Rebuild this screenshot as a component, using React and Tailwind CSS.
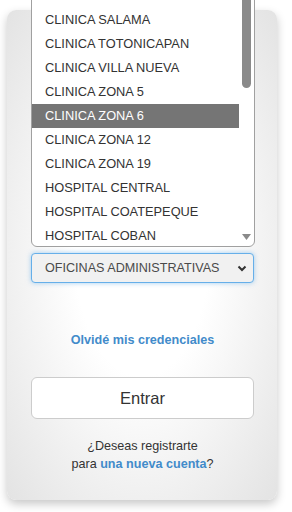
import React from "react";

const items = [
  "",
  "CLINICA SALAMA",
  "CLINICA TOTONICAPAN",
  "CLINICA VILLA NUEVA",
  "CLINICA ZONA 5",
  "CLINICA ZONA 6",
  "CLINICA ZONA 12",
  "CLINICA ZONA 19",
  "HOSPITAL CENTRAL",
  "HOSPITAL COATEPEQUE",
  "HOSPITAL COBAN",
];

export default function App() {
  return (
    <div
      className="relative w-[292px] h-[512px] overflow-hidden bg-white"
      style={{ fontFamily: '"Liberation Sans", Arial, sans-serif' }}
    >
      <div className="ml-[7px] mt-[10px] w-[270px] h-[490px] rounded-[9px] bg-[radial-gradient(ellipse_at_center,#ffffff_35%,#e3e3e3_100%)] shadow-[0_4px_10px_rgba(0,0,0,0.22)] pl-[24px] pr-[23px] flex flex-col">
        <div className="h-[243px] shrink-0" />
        <div className="h-[30px] rounded-[4px] border border-[#66afe9] shadow-[0_0_5px_rgba(102,175,233,0.6)] bg-[#f1f1f1] flex items-center justify-between pl-[13px] pr-[6px]">
          <span className="text-[12.6px] text-[#4a4a4a]">OFICINAS ADMINISTRATIVAS</span>
          <svg width="10" height="7" viewBox="0 0 10 7">
            <path d="M1.5 1.5 L5 5 L8.5 1.5" stroke="#333" strokeWidth="2" fill="none" />
          </svg>
        </div>
        <div className="mt-[48px] text-center text-[12.6px] font-bold text-[#428bca] leading-[18px]">
          Olvidé mis credenciales
        </div>
        <div className="mt-[28px] h-[42px] rounded-[6px] border border-[#cccccc] bg-white flex items-center justify-center text-[16.5px] text-[#333]">
          Entrar
        </div>
        <div className="mt-[18px] text-center text-[12.6px] leading-[18px] text-[#333]">
          ¿Deseas registrarte
          <br />
          para <span className="font-bold text-[#428bca]">una nueva cuenta</span>?
        </div>
      </div>

      <div className="absolute left-[31px] top-[-17px] w-[224px] h-[264px] bg-white border border-[#a0a0a0] rounded-b-[6px] overflow-hidden flex">
        <div className="flex-1 flex flex-col">
          {items.map((t, i) => (
            <div
              key={i}
              className={
                "h-[24px] shrink-0 flex items-center pl-[13px] text-[12.8px] " +
                (t === "CLINICA ZONA 6" ? "bg-[#757575] text-white" : "text-[#333]")
              }
            >
              {t}
            </div>
          ))}
        </div>
        <div className="w-[15px] flex flex-col items-center justify-between pb-[6px]">
          <div className="w-[9px] h-[104px] rounded-b-[5px] bg-[#8a8a8a]" />
          <svg width="9" height="6" viewBox="0 0 9 6">
            <path d="M0 0 L9 0 L4.5 6 Z" fill="#8a8a8a" />
          </svg>
        </div>
      </div>
    </div>
  );
}
